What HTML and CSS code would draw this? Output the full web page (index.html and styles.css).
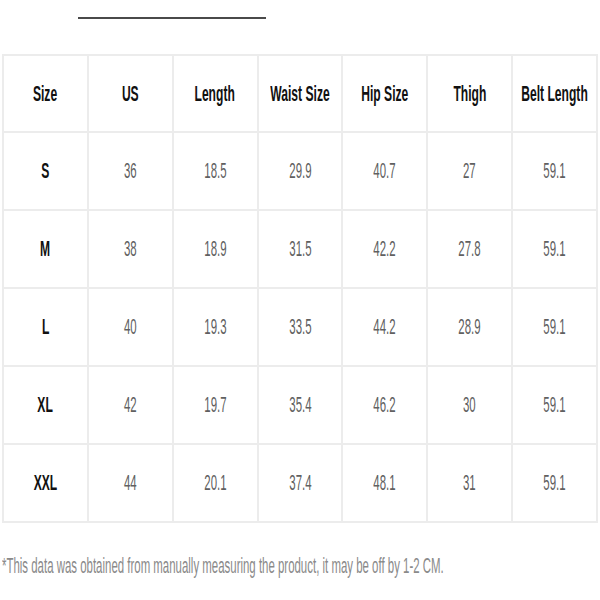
FILE: index.html
```html
<!DOCTYPE html>
<html>
<head>
<meta charset="utf-8">
<link rel="stylesheet" href="styles.css">
</head>
<body>
<div class="page">
  <div class="rule"></div>
  <table class="chart">
    <thead>
      <tr>
        <th><div class="cell"><span>Size</span></div></th>
        <th><div class="cell"><span>US</span></div></th>
        <th><div class="cell"><span>Length</span></div></th>
        <th><div class="cell"><span>Waist Size</span></div></th>
        <th><div class="cell"><span>Hip Size</span></div></th>
        <th><div class="cell"><span>Thigh</span></div></th>
        <th><div class="cell"><span>Belt Length</span></div></th>
      </tr>
    </thead>
    <tbody>
      <tr><th><div class="cell"><span>S</span></div></th><td><div class="cell"><span>36</span></div></td><td><div class="cell"><span>18.5</span></div></td><td><div class="cell"><span>29.9</span></div></td><td><div class="cell"><span>40.7</span></div></td><td><div class="cell"><span>27</span></div></td><td><div class="cell"><span>59.1</span></div></td></tr>
      <tr><th><div class="cell"><span>M</span></div></th><td><div class="cell"><span>38</span></div></td><td><div class="cell"><span>18.9</span></div></td><td><div class="cell"><span>31.5</span></div></td><td><div class="cell"><span>42.2</span></div></td><td><div class="cell"><span>27.8</span></div></td><td><div class="cell"><span>59.1</span></div></td></tr>
      <tr><th><div class="cell"><span>L</span></div></th><td><div class="cell"><span>40</span></div></td><td><div class="cell"><span>19.3</span></div></td><td><div class="cell"><span>33.5</span></div></td><td><div class="cell"><span>44.2</span></div></td><td><div class="cell"><span>28.9</span></div></td><td><div class="cell"><span>59.1</span></div></td></tr>
      <tr><th><div class="cell"><span>XL</span></div></th><td><div class="cell"><span>42</span></div></td><td><div class="cell"><span>19.7</span></div></td><td><div class="cell"><span>35.4</span></div></td><td><div class="cell"><span>46.2</span></div></td><td><div class="cell"><span>30</span></div></td><td><div class="cell"><span>59.1</span></div></td></tr>
      <tr><th><div class="cell"><span>XXL</span></div></th><td><div class="cell"><span>44</span></div></td><td><div class="cell"><span>20.1</span></div></td><td><div class="cell"><span>37.4</span></div></td><td><div class="cell"><span>48.1</span></div></td><td><div class="cell"><span>31</span></div></td><td><div class="cell"><span>59.1</span></div></td></tr>
    </tbody>
  </table>
  <p class="note"><span>*This data was obtained from manually measuring the product, it may be off by 1-2 CM.</span></p>
</div>
</body>
</html>
```
FILE: styles.css
```css
html, body {
  margin: 0;
  padding: 0;
  background: #fff;
}
.page {
  width: 600px;
  overflow: hidden;
  font-family: "Liberation Sans", Arial, sans-serif;
}
.rule {
  margin: 17px 0 0 78px;
  width: 188px;
  height: 2px;
  background: #4a4a4a;
}
.chart {
  margin: 35px 0 0 2px;
  width: 596px;
  table-layout: fixed;
  border-collapse: collapse;
  border: 2px solid #ececec;
}
.chart th, .chart td {
  border: 2px solid #ececec;
  vertical-align: middle;
  padding: 0;
  height: 76px;
  font-size: 22px;
  line-height: 24px;
  white-space: nowrap;
}
.chart thead th {
  height: 75px;
}
.chart th {
  font-weight: bold;
  color: #111;
}
.chart td {
  font-weight: normal;
  color: #606060;
}
.cell {
  display: flex;
  justify-content: center;
  overflow: hidden;
}
.cell span {
  flex: none;
  display: block;
  transform: scaleX(0.55);
  transform-origin: center;
}
.chart td .cell span {
  transform: scaleX(0.52);
}
.note {
  margin: 31px 0 0 2px;
  width: 596px;
  overflow: hidden;
  font-size: 22px;
  line-height: 24px;
  color: #8a8a8a;
  white-space: nowrap;
}
.note span {
  display: inline-block;
  transform: scaleX(0.52);
  transform-origin: left center;
}
```
